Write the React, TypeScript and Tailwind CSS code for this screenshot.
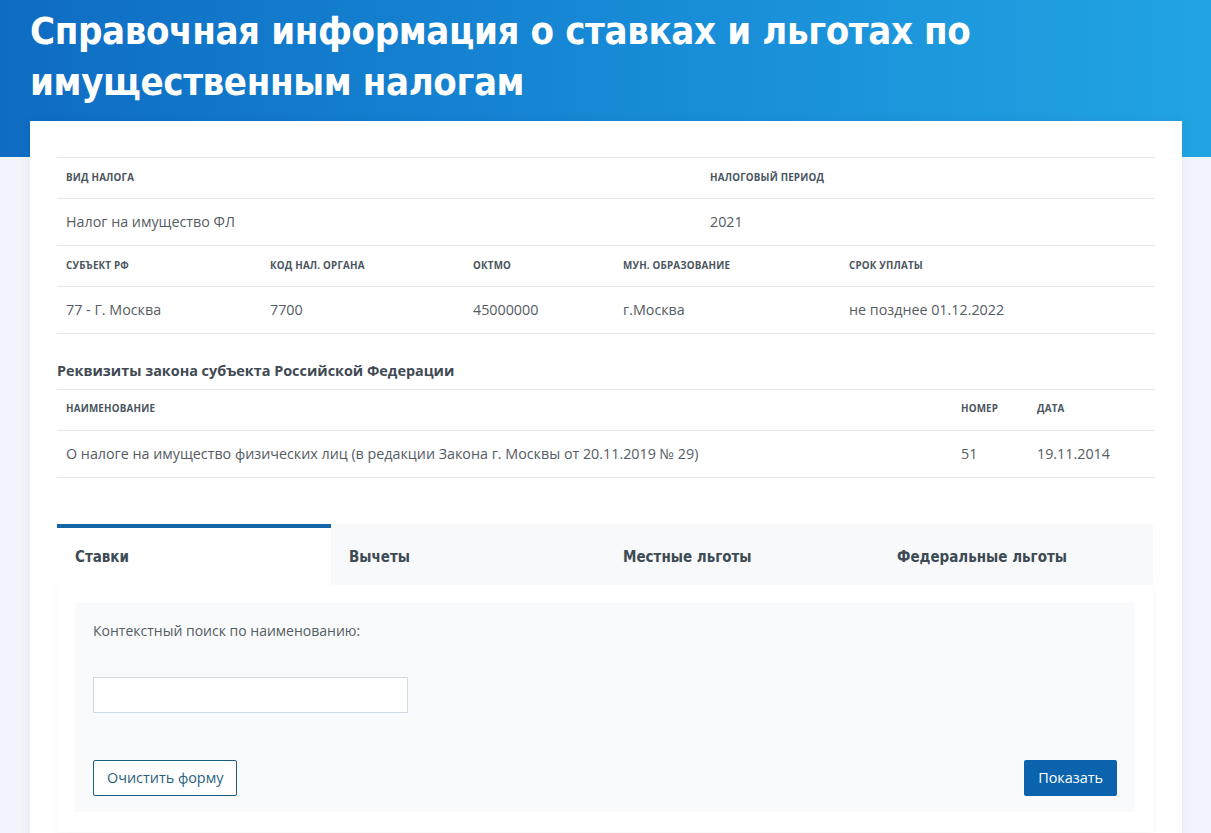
const cond = "font-['DejaVu_Sans_Condensed','DejaVu_Sans',sans-serif]";

function Head({ children, className = "" }: { children?: React.ReactNode; className?: string }) {
  return (
    <div className={`px-[9px] text-[9.8px] font-bold uppercase tracking-[0.02em] text-[#4a5560] ${className}`}>
      {children}
    </div>
  );
}

function Cell({ children, className = "" }: { children?: React.ReactNode; className?: string }) {
  return <div className={`px-[9px] text-[14.3px] text-[#555c63] ${className}`}>{children}</div>;
}

export default function App() {
  const tabs = ["Ставки", "Вычеты", "Местные льготы", "Федеральные льготы"];
  return (
    <main className="min-h-screen bg-[#f1f5fb] font-['Open_Sans',sans-serif]">
      <header className="h-[157px] bg-gradient-to-r from-[#0f6cc2] via-[#1789d6] to-[#22a4e2] px-[30px] pt-[6px]">
        <h1 className={`${cond} text-[38px] font-bold leading-[51px] text-white tracking-[-0.01em]`}>
          Справочная информация о ставках и льготах по
          <br />
          имущественным налогам
        </h1>
      </header>

      <section className="relative mx-[30px] -mt-[36px] w-[1152px] bg-white px-[27px] pt-[36px] pb-[20px] shadow-[0_0_12px_rgba(0,40,100,0.06)]">
        <div className="border-t border-[#e5e8eb]">
          <div className="grid h-[41px] grid-cols-[644px_1fr] items-center border-b border-[#e5e8eb]">
            <Head>Вид налога</Head>
            <Head>Налоговый период</Head>
          </div>
          <div className="grid h-[47px] grid-cols-[644px_1fr] items-center border-b border-[#e5e8eb]">
            <Cell>Налог на имущество ФЛ</Cell>
            <Cell>2021</Cell>
          </div>
          <div className="grid h-[41px] grid-cols-[204px_203px_150px_226px_1fr] items-center border-b border-[#e5e8eb]">
            <Head>Субъект РФ</Head>
            <Head>Код нал. органа</Head>
            <Head>ОКТМО</Head>
            <Head>Мун. образование</Head>
            <Head>Срок уплаты</Head>
          </div>
          <div className="grid h-[47px] grid-cols-[204px_203px_150px_226px_1fr] items-center border-b border-[#e5e8eb]">
            <Cell>77 - Г. Москва</Cell>
            <Cell>7700</Cell>
            <Cell>45000000</Cell>
            <Cell>г.Москва</Cell>
            <Cell>не позднее 01.12.2022</Cell>
          </div>
        </div>

        <h2 className="mt-[26px] mb-[7px] text-[14.4px] font-bold text-[#3f4a54]">
          Реквизиты закона субъекта Российской Федерации
        </h2>
        <div className="border-t border-[#e5e8eb]">
          <div className="grid h-[41px] grid-cols-[895px_76px_1fr] items-center border-b border-[#e5e8eb]">
            <Head>Наименование</Head>
            <Head>Номер</Head>
            <Head>Дата</Head>
          </div>
          <div className="grid h-[47px] grid-cols-[895px_76px_1fr] items-center border-b border-[#e5e8eb]">
            <Cell>О налоге на имущество физических лиц (в редакции Закона г. Москвы от 20.11.2019 № 29)</Cell>
            <Cell>51</Cell>
            <Cell>19.11.2014</Cell>
          </div>
        </div>

        <div className="mt-[46px] w-[1096px]">
          <div className="grid grid-cols-4">
            {tabs.map((t, i) => (
              <div
                key={t}
                className={`${cond} flex h-[61px] items-center px-[18px] pt-[2px] text-[15px] font-bold text-[#3e4b55] ${
                  i === 0 ? "border-t-4 border-[#1565a9] bg-white" : "bg-[#f8f9fa]"
                }`}
              >
                <span className={i === 0 ? "" : "mt-[4px]"}>{t}</span>
              </div>
            ))}
          </div>
          <div className="bg-white px-[18px] pt-[18px] pb-[20px] shadow-[0_2px_10px_rgba(0,0,0,0.04)]">
            <div className="bg-[#f9fafb] px-[18px] pt-[17px] pb-[16px]">
              <div className="text-[14px] text-[#555c63]">Контекстный поиск по наименованию:</div>
              <input className="mt-[36px] block h-[36px] w-[315px] border border-[#cfdbe6] bg-white px-2 text-[14px] outline-none" />
              <div className="mt-[47px] flex items-center justify-between">
                <button className="h-[36px] rounded-[2px] border border-[#1b5e7f] bg-white px-[13px] text-[14.4px] text-[#2a5f7d]">
                  Очистить форму
                </button>
                <button className="h-[36px] rounded-[2px] bg-[#0b63ad] px-[14px] text-[14.4px] text-white">
                  Показать
                </button>
              </div>
            </div>
          </div>
        </div>
      </section>
    </main>
  );
}
